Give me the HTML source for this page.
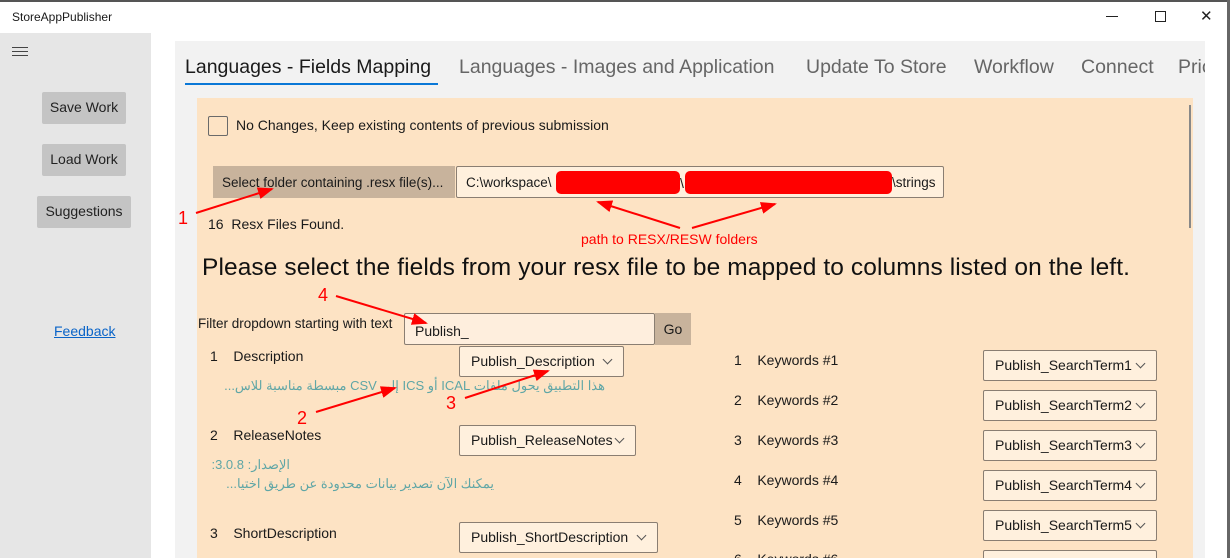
<!DOCTYPE html>
<html style="width:1230px;height:558px;overflow:hidden"><head><meta charset="utf-8"><style>
*{margin:0;padding:0;box-sizing:border-box}
body{width:1230px;height:558px;overflow:hidden;background:#fff;font-family:"Liberation Sans","Noto Sans CJK SC",sans-serif;color:#1a1a1a;position:relative}
.a{position:absolute;white-space:nowrap}
.btn{position:absolute;background:#c4c4c4;border-radius:2px;font-size:14px;text-align:center;line-height:31px;color:#222}
.dd{position:absolute;background:#fff0dd;border:1px solid #8a7e72;border-radius:2px;font-size:14px;line-height:28px;padding-left:11px;color:#1a1a1a;overflow:hidden}
.dd:after{content:"";position:absolute;right:12px;top:9px;width:6px;height:6px;border-right:1px solid #555;border-bottom:1px solid #555;transform:rotate(45deg)}
.t{font-size:14px}
.ar{font-size:13px;color:#5fa6a6;direction:rtl}
.tab{position:absolute;top:56px;font-size:19.5px;color:#666}
</style></head><body>
<div class="a" style="left:0;top:0;width:1230px;height:2px;background:#555"></div>
<div class="a" style="left:12px;top:10px;font-size:12px">StoreAppPublisher</div>
<div class="a" style="left:1106px;top:16px;width:12px;height:1px;background:#222"></div>
<div class="a" style="left:1155px;top:11px;width:11px;height:11px;border:1px solid #222"></div>
<div class="a" style="left:1200px;top:7px;font-size:15px;color:#222">✕</div>
<div class="a" style="left:1227px;top:0;width:3px;height:558px;background:#666"></div>

<div class="a" style="left:0;top:33px;width:151px;height:525px;background:#e6e6e6"></div>
<div class="a" style="left:12px;top:47px;width:16px;height:1px;background:#444;box-shadow:0 4px 0 #444,0 8px 0 #444"></div>
<div class="btn" style="left:42px;top:92px;width:84px;height:32px">Save Work</div>
<div class="btn" style="left:42px;top:144px;width:84px;height:32px">Load Work</div>
<div class="btn" style="left:37px;top:196px;width:94px;height:32px">Suggestions</div>
<div class="a" style="left:54px;top:323px;font-size:14px;color:#0a64c8;text-decoration:underline">Feedback</div>

<div class="a" style="left:175px;top:41px;width:1030px;height:517px;background:#f2f2f2"></div>
<div class="tab" style="left:185px;color:#1a1a1a">Languages - Fields Mapping</div>
<div class="a" style="left:185px;top:83px;width:253px;height:2px;background:#0a78d7"></div>
<div class="tab" style="left:459px">Languages - Images and Application</div>
<div class="tab" style="left:806px">Update To Store</div>
<div class="tab" style="left:974px">Workflow</div>
<div class="tab" style="left:1081px">Connect</div>
<div class="a" style="left:1178px;top:56px;width:27px;overflow:hidden;font-size:19.5px;color:#666">Pric</div>

<div class="a" style="left:197px;top:98px;width:996px;height:460px;background:#fde3c4"></div>
<div class="a" style="left:1189px;top:105px;width:2px;height:123px;background:#888"></div>

<div class="a" style="left:208px;top:116px;width:20px;height:20px;border:1px solid #6a6a6a;border-radius:2px"></div>
<div class="a t" style="left:236px;top:117px">No Changes, Keep existing contents of previous submission</div>

<div class="a" style="left:213px;top:166px;width:242px;height:32px;background:#c8b39c"></div>
<div class="a t" style="left:222px;top:175px;font-size:13.5px">Select folder containing .resx file(s)...</div>
<div class="a" style="left:456px;top:166px;width:488px;height:32px;background:#fff0dd;border:1px solid #8a7e72;border-radius:2px"></div>
<div class="a t" style="left:466px;top:175px;font-size:13.5px">C:\workspace\</div>
<div class="a" style="left:556px;top:171px;width:124px;height:23px;background:#f00;border-radius:5px"></div>
<div class="a t" style="left:680px;top:175px">\</div>
<div class="a" style="left:685px;top:171px;width:207px;height:23px;background:#f00;border-radius:5px"></div>
<div class="a t" style="left:892px;top:175px;font-size:13.5px">\strings</div>

<div class="a t" style="left:208px;top:216px">16&nbsp; Resx Files Found.</div>
<div class="a" style="left:581px;top:231px;font-size:14px;color:#f00">path to RESX/RESW folders</div>
<div class="a" style="left:202px;top:254px;font-size:24.5px;color:#111;letter-spacing:0.1px">Please select the fields from your resx file to be mapped to columns listed on the left.</div>

<div class="a t" style="left:198px;top:316px;font-size:13.5px">Filter dropdown starting with text</div>
<div class="a" style="left:404px;top:313px;width:251px;height:32px;background:#feeedd;border:1px solid #8a7e72;border-radius:2px;font-size:14px;padding:9px 0 0 10px">Publish_</div>
<div class="a" style="left:655px;top:313px;width:36px;height:32px;background:#c8b39c;font-size:14px;text-align:center;line-height:32px">Go</div>

<div class="a t" style="left:210px;top:348px">1&nbsp;&nbsp;&nbsp; Description</div>
<div class="dd" style="left:459px;top:346px;width:165px;height:31px">Publish_Description</div>
<div class="a ar" style="left:208px;top:378px;width:397px;text-align:right">هذا التطبيق يحول ملفات ICAL أو ICS إلى CSV مبسطة مناسبة للاس...</div>

<div class="a t" style="left:210px;top:427px">2&nbsp;&nbsp;&nbsp; ReleaseNotes</div>
<div class="dd" style="left:459px;top:425px;width:177px;height:31px">Publish_ReleaseNotes</div>
<div class="a ar" style="left:208px;top:457px;width:82px;text-align:right">الإصدار: 3.0.8:</div>
<div class="a ar" style="left:208px;top:476px;width:286px;text-align:right">يمكنك الآن تصدير بيانات محدودة عن طريق اختيا...</div>

<div class="a t" style="left:210px;top:525px">3&nbsp;&nbsp;&nbsp; ShortDescription</div>
<div class="dd" style="left:459px;top:522px;width:199px;height:31px">Publish_ShortDescription</div>

<div class="a t" style="left:734px;top:352px">1&nbsp;&nbsp;&nbsp; Keywords #1</div>
<div class="dd" style="left:983px;top:350px;width:174px;height:31px">Publish_SearchTerm1</div>
<div class="a t" style="left:734px;top:392px">2&nbsp;&nbsp;&nbsp; Keywords #2</div>
<div class="dd" style="left:983px;top:390px;width:174px;height:31px">Publish_SearchTerm2</div>
<div class="a t" style="left:734px;top:432px">3&nbsp;&nbsp;&nbsp; Keywords #3</div>
<div class="dd" style="left:983px;top:430px;width:174px;height:31px">Publish_SearchTerm3</div>
<div class="a t" style="left:734px;top:472px">4&nbsp;&nbsp;&nbsp; Keywords #4</div>
<div class="dd" style="left:983px;top:470px;width:174px;height:31px">Publish_SearchTerm4</div>
<div class="a t" style="left:734px;top:512px">5&nbsp;&nbsp;&nbsp; Keywords #5</div>
<div class="dd" style="left:983px;top:510px;width:174px;height:31px">Publish_SearchTerm5</div>
<div class="a t" style="left:734px;top:551px">6&nbsp;&nbsp;&nbsp; Keywords #6</div>
<div class="dd" style="left:983px;top:550px;width:174px;height:31px"></div>

<svg class="a" style="left:0;top:0" width="1230" height="558">
<defs><marker id="m" markerWidth="8" markerHeight="6" refX="7" refY="3" orient="auto" markerUnits="strokeWidth"><path d="M0,0 L8,3 L0,6 Z" fill="#f00"/></marker></defs>
<g stroke="#f00" stroke-width="2" fill="none" marker-end="url(#m)">
<line x1="196" y1="213" x2="272" y2="189"/>
<line x1="680" y1="228" x2="598" y2="202"/>
<line x1="692" y1="228" x2="775" y2="204"/>
<line x1="336" y1="296" x2="426" y2="323"/>
<line x1="316" y1="412" x2="395" y2="388"/>
<line x1="465" y1="398" x2="548" y2="371"/>
</g>
<g fill="#f00" font-family="Liberation Sans, sans-serif" font-size="18">
<text x="178" y="224">1</text>
<text x="318" y="301">4</text>
<text x="297" y="424">2</text>
<text x="446" y="409">3</text>
</g>
</svg>
</body></html>
